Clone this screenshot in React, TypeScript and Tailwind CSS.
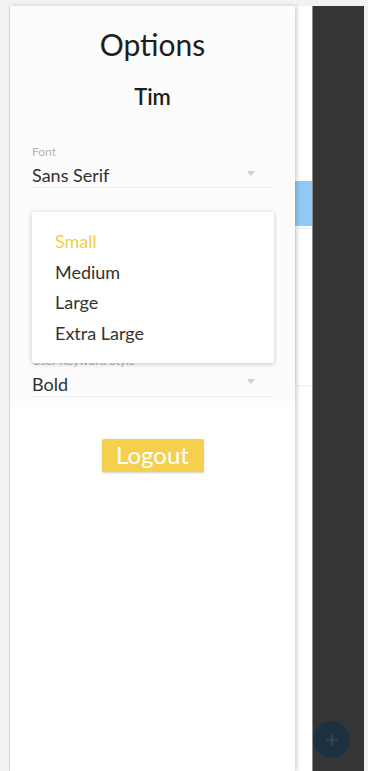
import { Plus } from "lucide-react";

const fields = [
  { label: "Font", value: "Sans Serif", hidden: false },
  { label: "Font Size", value: "Small", hidden: true },
  { label: "Theme", value: "Light", hidden: true },
  { label: "User Keyword Style", value: "Bold", hidden: false },
];

const sizes = ["Small", "Medium", "Large", "Extra Large"];

const Field = ({ label, value, hidden }: { label: string; value: string; hidden: boolean }) => (
  <div className={hidden ? "invisible flex flex-col" : "flex flex-col"}>
    <span className="text-[12px] leading-[16px] text-[#b3b3b3]">{label}</span>
    <div className="mt-[3px] flex items-center justify-between border-b border-[#f0f0f0] h-[25px]">
      <span className="text-[18px] leading-[24px] text-[#303030]">{value}</span>
      <span className="mr-[18px] mb-[4px] w-0 h-0 border-l-[4.5px] border-r-[4.5px] border-t-[5px] border-l-transparent border-r-transparent border-t-[#d0d0d0]" />
    </div>
  </div>
);

const App = () => {
  return (
    <div
      className="h-[771px] overflow-hidden bg-[#f2f2f2] pt-[6px] pl-[9px] pr-[4px]"
      style={{ fontFamily: "Lato, 'Open Sans', sans-serif" }}
    >
      <div className="relative flex h-[765px] border-l border-[#dcdcdc]">
        {/* app content behind the drawer */}
        <div className="flex-1 bg-white pt-[175px]">
          <div className="h-[45px] bg-[#90caf2]" />
          <div className="mt-[3px] ml-[286px] h-[156px] bg-white shadow-[0_0_2px_rgba(0,0,0,0.18)]" />
        </div>
        <div className="relative w-[52px] bg-[#353535] border-l border-[#8a8a8a]">
          <div className="absolute left-[0px] top-[715px] flex h-[37px] w-[37px] items-center justify-center rounded-full bg-[#1d3240]">
            <Plus size={18} strokeWidth={1.5} color="#40525d" />
          </div>
        </div>

        {/* drawer */}
        <div className="absolute left-0 top-0 flex h-full w-[285px] flex-col bg-white shadow-[2px_0_4px_rgba(0,0,0,0.18)]">
          <div className="flex flex-col bg-[#fcfcfc] pt-[20px] pb-[10px]">
            <h1 className="text-center text-[30px] leading-[36px] text-[#1e1e1e]">Options</h1>
            <h2 className="mt-[21px] text-center text-[22px] leading-[28px] font-semibold text-[#1e1e1e]">Tim</h2>
            <div className="mt-[33px] flex flex-col gap-[25.5px] pl-[22px] pr-[22px]">
              {fields.map((f) => (
                <Field key={f.label} label={f.label} value={f.value} hidden={f.hidden} />
              ))}
            </div>
          </div>
          <div className="mt-[32px] flex justify-center">
            <button className="h-[33px] w-[102px] rounded-[2px] bg-[#f4d04e] text-[24px] leading-[30px] text-white shadow-[0_1px_2px_rgba(0,0,0,0.2)]">
              Logout
            </button>
          </div>

          {/* open size menu */}
          <div className="absolute left-[22px] top-[206px] w-[242px] rounded-[2px] bg-white pt-[14px] pb-[15px] pl-[23px] shadow-[0_1px_5px_rgba(0,0,0,0.22)]">
            {sizes.map((s, i) => (
              <div
                key={s}
                className={`text-[18px] leading-[30.5px] ${i === 0 ? "text-[#f4cf48]" : "text-[#333333]"}`}
              >
                {s}
              </div>
            ))}
          </div>
        </div>
      </div>
    </div>
  );
};

export default App;
